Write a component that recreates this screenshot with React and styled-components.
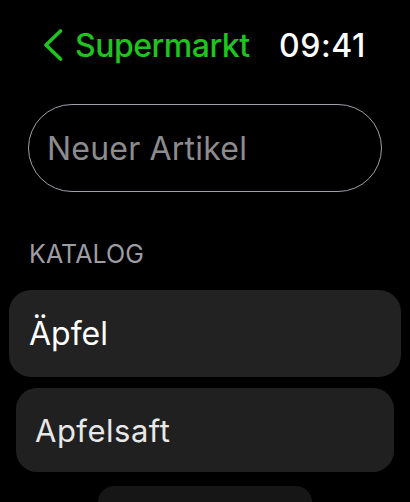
import React from "react";
import styled, { createGlobalStyle } from "styled-components";

const GlobalStyle = createGlobalStyle`
  html, body {
    margin: 0;
    padding: 0;
    background: #000;
  }
  body {
    font-family: "Inter", "Noto Sans", sans-serif;
    -webkit-font-smoothing: antialiased;
  }
`;

const Screen = styled.div`
  width: 410px;
  height: 502px;
  overflow: hidden;
  background: #000;
  color: #fff;
`;

const Header = styled.header`
  display: flex;
  align-items: center;
  justify-content: space-between;
  height: 90px;
  padding: 0 44px 0 43px;
`;

const BackLink = styled.a`
  display: flex;
  align-items: center;
  gap: 12px;
  color: #1fc41f;
  text-decoration: none;
  font-size: 32px;
  font-weight: 500;
  letter-spacing: -0.5px;
`;

const Clock = styled.span`
  font-size: 32px;
  font-weight: 500;
  color: #fff;
  letter-spacing: 0.6px;
`;

const Field = styled.input`
  display: block;
  box-sizing: border-box;
  width: 354px;
  height: 88px;
  margin: 14px 0 0 28px;
  padding: 0 18px;
  border: 1.5px solid #a0a0a8;
  border-radius: 44px;
  background: transparent;
  font-family: inherit;
  font-size: 32px;
  letter-spacing: 0.2px;
  color: #fff;
  outline: none;
  &::placeholder {
    color: #8c8c8e;
  }
`;

const SectionLabel = styled.h2`
  margin: 47px 0 0 29px;
  font-size: 25px;
  line-height: 30px;
  font-weight: 400;
  color: #9d9da6;
  letter-spacing: 0.1px;
`;

const List = styled.ul`
  list-style: none;
  margin: 21px 0 0;
  padding: 0;
  display: flex;
  flex-direction: column;
`;

const Card = styled.li`
  display: flex;
  align-items: center;
  box-sizing: border-box;
  height: ${(p) => p.$height}px;
  margin: ${(p) => p.$gap}px ${(p) => p.$inset}px 0;
  padding-left: ${(p) => p.$pad}px;
  border-radius: ${(p) => p.$radius}px;
  background: ${(p) => p.$bg};
  color: ${(p) => p.$color};
  font-size: ${(p) => p.$size}px;
  letter-spacing: ${(p) => p.$track}px;
`;

const items = [
  { name: "Äpfel", gap: 0, inset: 9, height: 87, pad: 20, radius: 22, bg: "#222222", color: "#ffffff", size: 32, track: 0 },
  { name: "Apfelsaft", gap: 11, inset: 16, height: 84, pad: 19, radius: 21, bg: "#202020", color: "#e8e8e8", size: 31, track: 0.5 },
  { name: "", gap: 14, inset: 98, height: 60, pad: 12, radius: 16, bg: "#161616", color: "#bbbbbb", size: 18, track: 0 },
];

function Chevron() {
  return (
    <svg width="20" height="32" viewBox="0 0 20 32" fill="none">
      <polyline
        points="17.5,2 3,16 17.5,30"
        stroke="#1fc41f"
        strokeWidth="3.6"
        strokeLinecap="round"
        strokeLinejoin="round"
      />
    </svg>
  );
}

export default function App() {
  return (
    <Screen>
      <GlobalStyle />
      <Header>
        <BackLink href="#">
          <Chevron />
          Supermarkt
        </BackLink>
        <Clock>09:41</Clock>
      </Header>
      <Field placeholder="Neuer Artikel" />
      <SectionLabel>KATALOG</SectionLabel>
      <List>
        {items.map((it, i) => (
          <Card
            key={i}
            $gap={it.gap}
            $inset={it.inset}
            $height={it.height}
            $pad={it.pad}
            $radius={it.radius}
            $bg={it.bg}
            $color={it.color}
            $size={it.size}
            $track={it.track}
          >
            {it.name}
          </Card>
        ))}
      </List>
    </Screen>
  );
}
